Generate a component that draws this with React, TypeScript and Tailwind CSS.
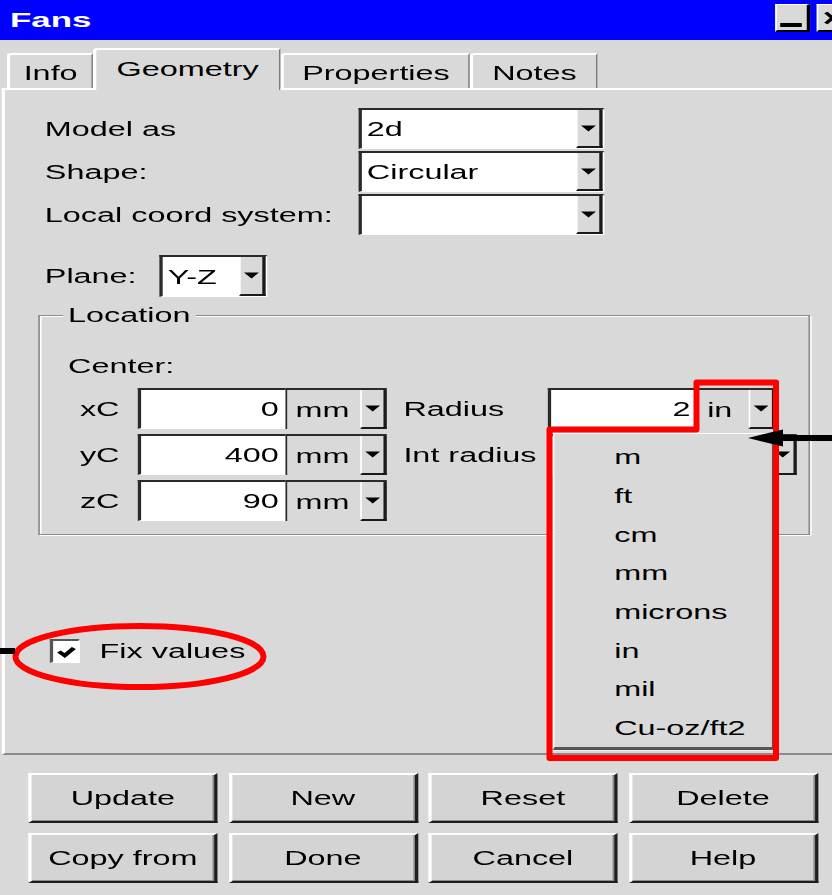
import React from 'react'

// old Motif-style "Fans" dialog, geometry tab with the unit list open

const ArrowIcon = () => (
    <svg width="9" height="7" viewBox="0 0 9 7">
        <path d="M0 0.5H9L4.5 6.5Z" fill="#000" />
    </svg>
)

const ArrowBox = () => (
    <div className="flex w-[16px] shrink-0 items-center justify-center border-l border-r-2 border-b-2 border-l-white border-r-[#1a1a1a] border-b-[#1a1a1a] bg-[#d9d9d9]">
        <ArrowIcon />
    </div>
)

const Combo = ({ value }: { value: string }) => (
    <div className="flex h-full border-t-2 border-l-2 border-r border-b border-t-[#2a2a2a] border-l-[#2a2a2a] border-r-white border-b-white bg-white">
        <span className="flex flex-1 items-center pl-[3px]">{value}</span>
        <ArrowBox />
    </div>
)

const UnitCombo = ({ value, w }: { value: string; w: string }) => (
    <div className={`flex h-full shrink-0 border-t-2 border-l border-t-[#2a2a2a] border-l-[#2a2a2a] bg-[#d9d9d9] ${w}`}>
        <span className="flex flex-1 items-center pl-[5px]">{value}</span>
        <ArrowBox />
    </div>
)

const NumField = ({ value, w }: { value: string; w: string }) => (
    <div className={`flex h-full shrink-0 items-center justify-end border-t-2 border-l-2 border-b border-t-[#2a2a2a] border-l-[#2a2a2a] border-b-white bg-white pr-[4px] ${w}`}>
        {value}
    </div>
)

const tabs = [
    { label: 'Info', w: 'w-[52px]' },
    { label: 'Geometry', w: 'w-[113px]', active: true },
    { label: 'Properties', w: 'w-[114px]' },
    { label: 'Notes', w: 'w-[77px]' },
]

const units = ['m', 'ft', 'cm', 'mm', 'microns', 'in', 'mil', 'Cu-oz/ft2']

const buttons = ['Update', 'New', 'Reset', 'Delete', 'Copy from', 'Done', 'Cancel', 'Help']

const coords = [
    { axis: 'xC', value: '0', right: 'Radius', rightValue: '2', unit: 'in' },
    { axis: 'yC', value: '400', right: 'Int radius', rightValue: '', unit: 'in' },
    { axis: 'zC', value: '90' },
]

const App: React.FC = () => {
    return (
        <div className="relative h-[895px] w-[832px] overflow-hidden bg-[#d9d9d9]">
            <div className="relative h-[895px] w-[502px] origin-top-left scale-x-[1.66] font-['Liberation_Sans',Arial,sans-serif] text-[19.5px] leading-[24px] text-black">
                {/* title bar */}
                <div className="flex h-[40px] items-start bg-[#0000ff]">
                    <span className="ml-[6px] mt-[7px] text-[21px] font-bold leading-[26px] text-white">Fans</span>
                    <div className="ml-auto mr-[-10px] mt-[4px] flex gap-[4px]">
                        <div className="flex h-[28px] w-[20.5px] items-end justify-center border-t border-l border-r-2 border-b-2 border-t-white border-l-white border-r-black border-b-black bg-[#d9d9d9] pb-[3px]">
                            <span className="h-[4px] w-[13px] bg-black" />
                        </div>
                        <div className="flex h-[28px] w-[20.5px] items-center justify-center border-t border-l border-r-2 border-b-2 border-t-white border-l-white border-r-black border-b-black bg-[#d9d9d9]">
                            <svg width="11" height="14" viewBox="0 0 11 14">
                                <path d="M1.5 1.5L9.5 12.5M9.5 1.5L1.5 12.5" stroke="#000" strokeWidth="2.6" />
                            </svg>
                        </div>
                    </div>
                </div>

                {/* tabs */}
                <div className="flex h-[48px] items-end pl-[4px]">
                    {tabs.map((t) =>
                        t.active ? (
                            <div
                                key={t.label}
                                className={`relative z-10 mb-[-2px] flex h-[42px] items-start justify-center rounded-tl-[3px] border-t-2 border-l-2 border-r border-t-white border-l-white border-r-[#7a7a7a] bg-[#d9d9d9] pt-[7px] ${t.w}`}
                            >
                                {t.label}
                            </div>
                        ) : (
                            <div
                                key={t.label}
                                className={`flex h-[35px] items-start justify-center rounded-tl-[3px] border-t-2 border-l-2 border-r border-t-white border-l-white border-r-[#7a7a7a] pt-[6px] ${t.w}`}
                            >
                                {t.label}
                            </div>
                        )
                    )}
                </div>

                {/* tab page */}
                <div className="ml-[1px] mr-[-10px] h-[667px] border-t-2 border-l-2 border-b-2 border-t-white border-l-white border-b-[#8a8a8a] pl-[24px] pt-[18px]">
                    <div className="grid grid-cols-[189px_148px] gap-y-[2px]">
                        <span className="flex h-[41px] items-center">Model as</span>
                        <Combo value="2d" />
                        <span className="flex h-[41px] items-center">Shape:</span>
                        <Combo value="Circular" />
                        <span className="flex h-[41px] items-center">Local coord system:</span>
                        <Combo value="" />
                    </div>

                    <div className="mt-[20px] grid h-[42px] grid-cols-[69px_65px]">
                        <span className="flex items-center">Plane:</span>
                        <Combo value="Y-Z" />
                    </div>

                    <fieldset className="ml-[-4px] mt-[6px] w-[465px] border border-[#8c8c8c] pb-[13px] pl-[17px] shadow-[inset_1px_1px_0_#fff,1px_1px_0_#fff]">
                        <legend className="ml-[-3px] bg-[#d9d9d9] px-[3px] leading-[24px]">Location</legend>
                        <div className="mt-[27px] h-[24px]">Center:</div>
                        <div className="mt-[10px] flex flex-col gap-[5px]">
                            {coords.map((c) => (
                                <div key={c.axis} className="flex h-[41px]">
                                    <span className="flex w-[31px] shrink-0 items-center justify-end">{c.axis}</span>
                                    <div className="ml-[11px] flex">
                                        <NumField value={c.value} w="w-[89px]" />
                                        <UnitCombo value="mm" w="w-[60.5px]" />
                                    </div>
                                    {c.right && (
                                        <>
                                            <span className="ml-[10.5px] flex w-[87px] shrink-0 items-center">{c.right}</span>
                                            <NumField value={c.rightValue ?? ''} w={c.axis === 'xC' ? 'w-[90px]' : 'w-[103px]'} />
                                            <UnitCombo value={c.unit ?? ''} w="w-[47px]" />
                                        </>
                                    )}
                                </div>
                            ))}
                        </div>
                    </fieldset>

                    <label className="ml-[3px] mt-[104px] flex h-[24px] items-center gap-[12px]">
                        <span className="flex h-[24px] w-[18px] items-center justify-center border-t-2 border-l-2 border-r border-b border-t-[#555] border-l-[#555] border-r-white border-b-white bg-white">
                            <svg width="12" height="14" viewBox="0 0 12 14">
                                <path d="M1.5 6.5L5 10.5L10.5 3" stroke="#000" strokeWidth="3" fill="none" />
                            </svg>
                        </span>
                        <span>Fix values</span>
                    </label>
                </div>

                {/* dialog buttons */}
                <div className="ml-[17px] mt-[18px] grid grid-cols-[repeat(4,114px)] gap-x-[6.5px] gap-y-[10px]">
                    {buttons.map((b) => (
                        <button
                            key={b}
                            className="h-[50px] border-t-2 border-l-2 border-r-2 border-b-2 border-t-white border-l-white border-r-[#1e1e1e] border-b-[#1e1e1e] bg-[#d4d4d4] shadow-[inset_-1px_-1px_0_#8a8a8a]"
                        >
                            {b}
                        </button>
                    ))}
                </div>

                {/* open unit list */}
                <div className="absolute left-[333px] top-[433px] z-20 h-[317px] w-[133px] border-t border-l border-r border-b-[3px] border-t-white border-l-white border-r-[#555] border-b-[#555] bg-[#d9d9d9] pt-[4px]">
                    {units.map((u) => (
                        <div key={u} className="flex h-[38.7px] items-center pl-[36px]">
                            {u}
                        </div>
                    ))}
                </div>
            </div>

            {/* callouts */}
            <svg className="pointer-events-none absolute inset-0 z-30" width="832" height="895">
                <path
                    d="M696.5 382.5H776V758H549.5V429.5H696.5Z"
                    fill="none"
                    stroke="#ff0000"
                    strokeWidth="6"
                    strokeLinejoin="round"
                />
                <line x1="778" y1="438" x2="832" y2="438" stroke="#000" strokeWidth="6" />
                <path d="M748 438L783 429.5V446.5Z" fill="#000" />
                <ellipse cx="139.5" cy="656.5" rx="124" ry="30.5" fill="none" stroke="#ff0000" strokeWidth="6" />
                <line x1="0" y1="651" x2="15" y2="651" stroke="#000" strokeWidth="6" />
            </svg>
        </div>
    )
}

export default App
